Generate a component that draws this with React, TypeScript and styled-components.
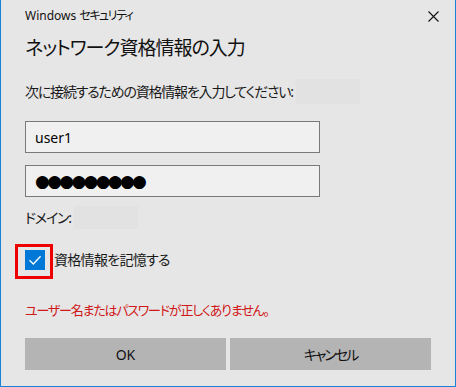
import styled, { createGlobalStyle } from 'styled-components'

const GlobalStyle = createGlobalStyle`
  html, body {
    margin: 0;
    padding: 0;
    background: #e6e6e6;
  }
  * {
    box-sizing: border-box;
  }
`

const App = () => {
  return (
    <>
      <GlobalStyle />
      <Window>
        <TitleBar>
          <Caption>
            Windows <Kana>セキュリティ</Kana>
          </Caption>
          <Close aria-label="close">
            <svg width="11" height="11" viewBox="0 0 11 11">
              <path d="M0.5 0.5 L10.5 10.5 M10.5 0.5 L0.5 10.5" stroke="#111" strokeWidth="1.1" fill="none" />
            </svg>
          </Close>
        </TitleBar>
        <Body>
          <Heading>ネットワーク資格情報の入力</Heading>
          <Prompt>
            次に接続するための資格情報を入力してください:
            <Hidden $w={64} $h={25} />
          </Prompt>
          <Field>user1</Field>
          <Field $secret>●●●●●●●●●</Field>
          <Prompt $top={9}>
            ドメイン:
            <Hidden $w={64} $h={23} />
          </Prompt>
          <CheckRow>
            <Box>
              <svg width="20" height="20" viewBox="0 0 20 20">
                <path d="M4.5 10.2 L8.3 14 L15.6 6.2" stroke="#fff" strokeWidth="1.3" fill="none" />
              </svg>
              <Mark />
            </Box>
            <CheckLabel>資格情報を記憶する</CheckLabel>
          </CheckRow>
          <ErrorText>ユーザー名またはパスワードが正しくありません。</ErrorText>
          <Buttons>
            <Button>OK</Button>
            <Button $kana>キャンセル</Button>
          </Buttons>
        </Body>
      </Window>
    </>
  )
}

export default App

const Window = styled.div`
  width: 456px;
  height: 387px;
  background: #e6e6e6;
  border: 1px solid #1883d7;
  border-top: none;
  font-family: "Noto Sans", "Noto Sans CJK JP", sans-serif;
  font-feature-settings: "palt";
  color: #1a1a1a;
  display: flex;
  flex-direction: column;
`
const TitleBar = styled.div`
  height: 32px;
  display: flex;
  align-items: center;
  justify-content: space-between;
  padding: 0 16px 0 24px;
`
const Caption = styled.div`
  font-size: 12px;
  line-height: 16px;
  color: #111;
`
const Kana = styled.span`
  letter-spacing: -1.5px;
`
const Close = styled.div`
  width: 11px;
  height: 11px;
  display: flex;
`
const Body = styled.div`
  padding: 0 24px;
  display: flex;
  flex-direction: column;
  align-items: flex-start;
`
const Heading = styled.div`
  margin-top: 2px;
  font-size: 19px;
  line-height: 28px;
  letter-spacing: -1px;
  color: #111;
`
const Prompt = styled.div<{ $top?: number }>`
  margin-top: ${p => p.$top ?? 17}px;
  font-size: 14px;
  line-height: 20px;
  letter-spacing: -1.2px;
  display: flex;
  align-items: center;
  gap: 3px;
`
const Hidden = styled.span<{ $w: number; $h: number }>`
  display: inline-block;
  width: ${p => p.$w}px;
  height: ${p => p.$h}px;
  background: #e2e2e2;
`
const Field = styled.div<{ $secret?: boolean }>`
  margin-top: ${p => (p.$secret ? 12 : 17)}px;
  width: 295px;
  height: 32px;
  border: 1px solid #7a7a7a;
  background: #f0f0f0;
  padding-left: 9px;
  display: flex;
  align-items: center;
  font-family: ${p => (p.$secret ? '"DejaVu Sans", sans-serif' : 'inherit')};
  font-size: ${p => (p.$secret ? 17 : 14)}px;
  letter-spacing: ${p => (p.$secret ? '-2.7px' : '0')};
  color: #000;
`
const CheckRow = styled.div`
  margin-top: 13px;
  height: 34px;
  display: flex;
  align-items: center;
  gap: 9px;
`
const Box = styled.div`
  position: relative;
  width: 20px;
  height: 20px;
  background: #0078d7;
  margin-top: 2px;
`
const Mark = styled.div`
  position: absolute;
  left: -10px;
  top: -6px;
  width: 38px;
  height: 35px;
  border: 3px solid #ee0000;
`
const CheckLabel = styled.div`
  font-size: 14px;
  line-height: 20px;
  letter-spacing: -0.7px;
  margin-top: 1px;
`
const ErrorText = styled.div`
  margin-top: 24px;
  font-size: 13px;
  line-height: 20px;
  letter-spacing: -1.2px;
  color: #d01818;
`
const Buttons = styled.div`
  margin-top: 18px;
  width: 100%;
  display: grid;
  grid-template-columns: 1fr 1fr;
  gap: 4px;
`
const Button = styled.div<{ $kana?: boolean }>`
  height: 32px;
  background: #b4b4b4;
  display: flex;
  align-items: center;
  justify-content: center;
  font-size: 14px;
  letter-spacing: ${p => (p.$kana ? '-2px' : '0')};
  color: #111;
`
